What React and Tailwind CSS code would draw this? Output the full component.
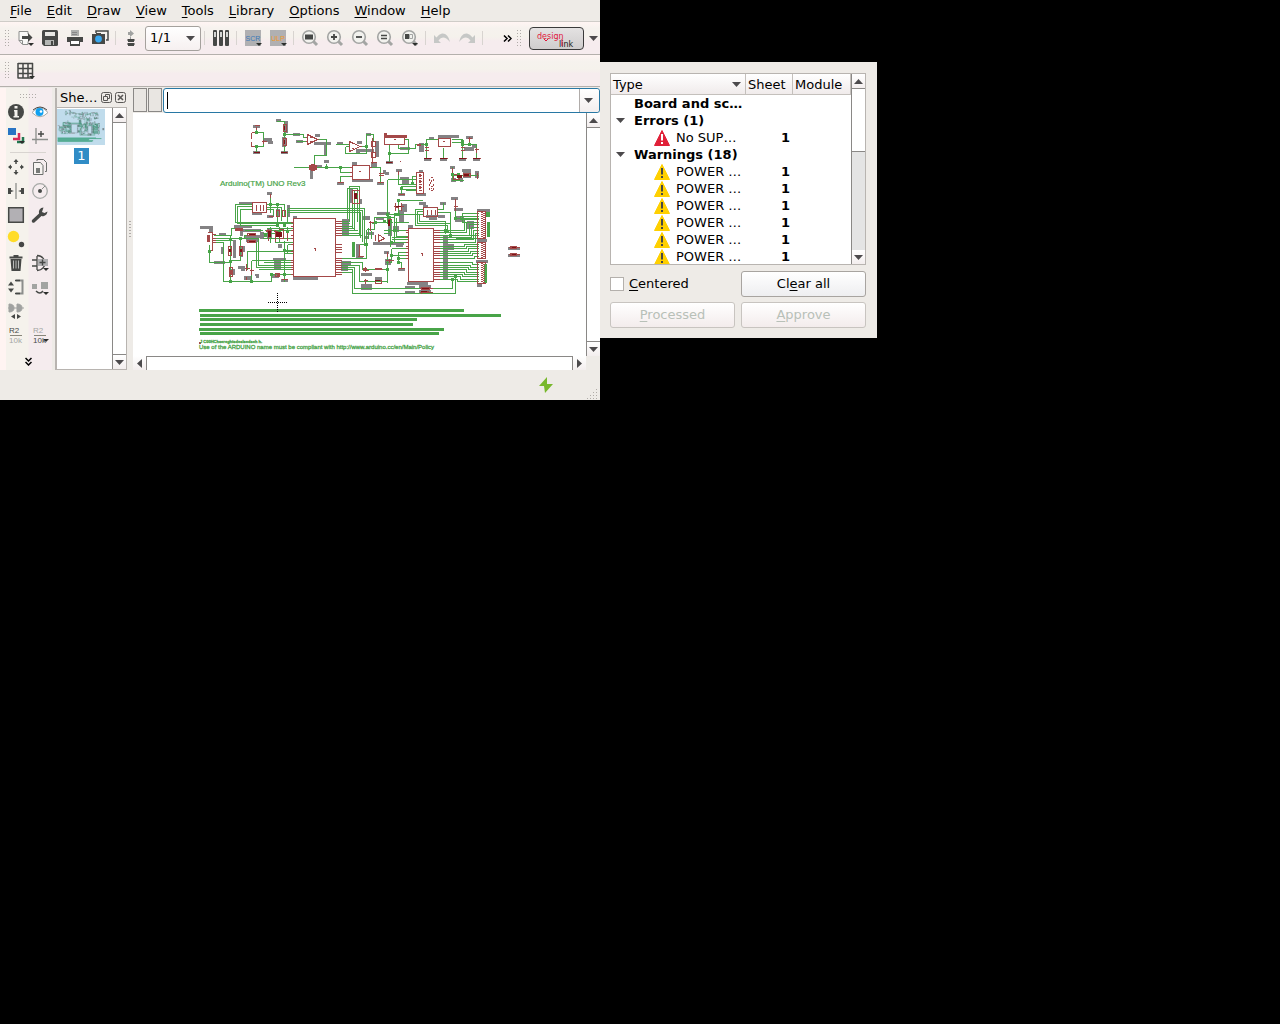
import React from "react";

const GRAY_RECTS = [
  [253,125,7,3],[253,151,7,3],[264,138,8,4],[268,141,5,3],[276,119,5,3],[285,121,3,12],[282,137,4,10],[281,151,7,3],
  [293,133,7,3],[296,140,7,3],[315,134,5,3],[314,142,17,3],[324,143,3,13],[310,169,3,10],[317,165,5,3],[324,160,5,3],
  [337,142,6,3],[356,150,4,3],[352,162,5,3],[337,182,7,3],[267,192,5,3],[239,202,14,3],[252,212,10,3],[267,215,6,3],
  [276,209,4,8],[287,205,3,12],[200,226,13,3],[293,216,4,2],[342,219,7,16],[350,189,3,14],[357,141,5,3],[356,149,18,3],
  [366,133,5,3],[375,141,4,16],[371,163,6,4],[386,161,7,3],[400,147,10,3],[419,143,5,9],[429,137,5,3],[438,135,21,3],
  [424,158,7,3],[440,158,7,3],[459,158,7,3],[473,158,7,3],[464,147,10,4],[472,145,5,3],[466,136,7,3],[352,179,21,3],
  [383,170,3,4],[385,172,4,3],[377,182,7,3],[396,169,6,3],[400,177,9,3],[402,180,7,5],[398,193,7,3],[416,193,10,3],
  [419,170,4,3],[450,166,5,3],[462,169,9,3],[451,178,5,4],[460,178,3,4],[463,172,8,6],[475,171,4,7],[359,199,3,5],
  [419,202,7,3],[423,205,5,3],[426,215,11,3],[429,218,8,2],[440,202,6,3],[438,215,7,3],[451,197,7,3],[454,208,9,3],
  [455,216,9,6],[467,221,7,8],[477,209,13,3],[377,212,13,3],[401,204,6,8],[399,210,5,12],[408,225,5,3],[388,222,4,14],
  [209,229,4,3],[219,233,7,3],[221,247,3,7],[233,240,3,18],[240,247,3,10],[242,246,3,6],[214,261,11,3],[238,266,7,3],
  [241,269,4,2],[229,269,6,6],[244,276,7,4],[255,274,4,2],[256,276,3,2],[273,258,13,3],[274,261,7,9],[271,274,8,4],
  [281,279,7,3],[293,276,25,4],[234,225,18,3],[242,229,19,3],[240,229,3,7],[244,235,16,3],[246,239,12,3],[260,232,4,7],
  [341,261,10,4],[341,266,7,5],[278,244,4,4],[356,244,4,13],[443,235,5,45],[448,244,6,6],[407,282,21,3],[405,286,10,3],
  [405,291,10,3],[419,285,12,4],[419,290,12,3],[477,239,10,3],[476,260,12,3],[477,284,5,3],[508,247,12,3],[508,254,12,3],
  [361,284,11,6],[375,277,7,3],[361,273,11,3],[385,259,6,6],[384,251,5,3],[398,268,7,3],[373,242,31,3],[396,244,7,3],
  [356,256,7,3],[367,232,7,3],[376,217,8,3],[267,229,5,10],[363,216,7,4],[393,226,6,6],[364,236,5,3],
];

const WIRES = [
  "M256 129V132H263V146H252M256 146V151M276 121H284V125M284 129V138M284 145V151M284 134H303V137H307M296 141H307",
  "M317 139H326V155H314V165M293 167H309M315 167H352M326 163V167M340 167V172H352M340 182V176H352",
  "M335 144H349M345 146H349M345 146V153H366V134H373V140M361 146H366M366 153V149",
  "M404 139H408V153H389M389 144V161M398 144V148H415V144H426V139H438M426 144V158M443 147V158M451 139H462V158M451 142H462M462 144H476V158M469 138V144",
  "M369 167H380V183M398 172V184H416M387 179V223M387 179H416M401 193V186H416M401 189H416M405 190H416M412 183V176H416M452 166V180H463M452 175H478M458 175V180",
  "M252 204H235V222H293M252 206H237V223H293M252 209H240V225H277M270 194V204M266 204H284V216M266 207H281V220M266 209H273V215M277 204V222M270 204V212",
  "M287 208H364V245M287 210H362V241M287 212H360V237M287 208V221",
  "M347 218V188H357V221M349 221V186H359V235M352 190V228M354 230V190M341 221H347M341 223H349M341 226H352M341 228H354M341 230H357M341 233H359M341 235H362",
  "M423 209H415V225H447V230M423 211H417V223H450V235M423 214H419V221H445V233M437 209H443V202M437 212H450V235M398 200H422M398 200V205M387 214H423M455 200V218H478",
  "M213 235H231V228H238M213 238H244V235H252M213 240H232M215 242H223V281H271V274H293M209 244V262H230M230 235V281M240 238V260H230M247 269V251H293M251 260V281M251 260H293M256 242V267H293M258 238V265H293M246 242H256M244 238H258M263 262H293M258 269H293",
  "M284 240V281M284 250H293M284 253H293M287 244V253M287 244H293M240 225H266M244 230H262M262 238H293M262 233H275V242H293M266 228H293V230M264 230H290M279 226V241M287 226V240M270 226V242",
  "M341 258H366M341 262H362V269M341 265H359V281H363M341 267H354V288H452V279M341 269H352V293H455V276M341 272H352M366 229V258M359 244H366M366 229H374",
  "M391 248H408M391 248V262H385M408 252H398V262H401V268M408 255H391M398 258H408M387 256V282M364 269H387M363 281H387M391 242H408M391 239H408M391 237H408M383 230H408M383 233H390V242",
  "M374 229V217H394V222H408M387 214V219M376 222H392M394 212V242M398 205V214M371 223H376M371 238V230M368 227V238M390 217V246M396 217V236H408",
  "M439 230H464V219H478M439 232H466V222H478M439 235H469V224H478M439 237H471V227H478M439 239H473V230H478M439 242H475V233H478M464 219H460V216H478M466 222H462V213H478M458 235H478M455 238H478",
  "M439 246H464V244H478M439 248H466V246H478M439 251H468V248H478M439 253H470V251H478M439 255H472V253H478M439 258H474V256H478",
  "M439 262H472V264H478M439 265H470V267H478M439 267H468V269H478M439 269H466V272H478M439 272H464V274H478M439 274H462V276H478M439 276H460V279H478M439 279H457V281H478",
];

const PARTS = [
  "M251 132V138M251 141V146M251 132H254M251 146H254M261 141H266M263 139V143M254 152H259M256 126V129M254 125H259",
  "M283 124H286V131H283ZM283 138H286V145H283ZM281 152H287M307 134V144L317 139ZM305 137H307M305 141H307M309 137H311M309 141H311",
  "M349 141V151L360 146ZM351 143H353M351 148H353M384 135H404V144H384ZM438 138H450V146H438ZM352 165H369V179H352ZM349 167H352M349 172H352M349 176H352M369 167H371",
  "M386 162H392M399 161H400M424 158H431M440 158H447M459 158H466M473 158H480M424 147H428M424 150H428M460 147H464M460 150H464M474 149H478M476 147V152M469 136V141M467 138H471M337 182H343M377 182H383M378 173H383M378 175H383",
  "M371 141H375V146H371ZM371 152H375V157H371ZM372 137V163M370 162H376M416 172H423V193H416ZM418 175H421M418 178H421M418 181H421M418 184H421M418 187H421M418 190H421M398 170V174M398 194H404",
  "M423 207H437V216H423ZM427 209V214M431 209V214M435 209V214M252 202H266V212H252ZM256 204V210M260 204V210M263 204V210M276 210H279V216H276ZM282 210H285V216H282ZM268 216H273M270 193V197",
  "M395 202V210M398 204V208M401 202V210M393 206H403M389 215V225M387 219H391M352 190H359V203H352ZM354 194H357M354 198H357M455 198V210M453 206H457M463 173H470V176H463ZM452 167V174M477 172V178M453 174H459V179H453Z",
  "M293 218H335V276H293ZM408 228H433V281H408ZM207 232H212V250H207M212 234H215M212 238H215M212 240H215M212 242H215M235 228H242V230H235ZM247 233H255V235H247ZM247 240H255V242H247Z",
  "M228 246H231V255H228ZM239 246H242V255H239ZM229 267H232V276H229ZM246 263V270M244 268H249M251 268V274M249 270H253M246 276V279M275 273H279V276H275ZM281 279H287M268 228V240M266 230H271M279 229H283V238H279ZM287 229V240M273 231H277M275 229V241",
  "M290 222H293M290 226H293M290 230H293M290 235H293M290 238H293M290 244H293M290 251H293M290 260H293M290 262H293M290 265H293M290 267H293M290 269H293M290 274H293",
  "M335 221H341M335 223H341M335 226H341M335 228H341M335 230H341M335 233H341M335 235H341M335 244H341M335 247H341M335 249H341M335 252H341M335 258H341M335 260H341M335 262H341M335 265H341M335 267H341M335 269H341M335 272H341M335 274H341",
  "M405 230H408M405 232H408M405 237H408M405 242H408M405 246H408M405 248H408M405 252H408M405 255H408M405 258H408M433 230H439M433 232H439M433 235H439M433 237H439M433 239H439M433 242H439M433 246H439M433 248H439M433 251H439M433 253H439M433 255H439M433 258H439M433 262H439M433 265H439M433 267H439M433 269H439M433 272H439M433 274H439M433 276H439M433 279H439",
  "M477 211H485V238H477ZM477 242H485V258H477ZM477 262H485V283H477ZM375 234V240M378 234L384 238L378 241ZM359 244V255M357 256H363M385 260H393M389 258V262M398 268H404M363 267V270H368M363 280H367M365 266V271M365 278V283M374 269H382M375 280H381V283H375ZM387 251V256",
  "M421 287H429V289H421ZM419 288H432M419 292H432M421 290V293M510 246H516V248H510ZM508 247H519M510 253H516V255H510ZM508 254H519M370 220V230M368 222H373",
  "M430 177H432M429 178V180M433 178V180M431 181V179M430 183V181M429 183V185M433 183V185M430 186H432M429 187V189M433 187V189M431 187V188M430 190H432",
];

const NODES = [
  [256,132],[256,146],[284,134],[326,167],[340,167],[366,146],[389,153],[426,144],[462,141],[462,144],[469,144],[412,183],
  [401,188],[398,200],[387,214],[396,214],[398,214],[270,204],[277,204],[277,225],[284,225],[230,239],[230,261],[230,281],
  [240,238],[251,281],[209,251],[284,250],[284,274],[271,274],[391,255],[398,258],[398,262],[391,242],[387,269],[366,244],
  [455,218],[447,231],[450,235],[445,230],[452,279],[455,276],[279,231],[287,231],[384,221],[390,221],[389,217],[458,174],
  [452,174],[375,222],[394,230],[389,230],[265,235],
];

const DETAIL_RED = [
  [384,133,3,3],[384,135,23,3],[309,165,8,5],[311,164,4,7],[207,235,3,7],[229,270,4,5],[236,228,6,2],[277,273,3,3],
  [314,248,2,1],[315,249,1,2],[421,253,2,1],[422,254,1,2],[394,139,2,1],[443,141,2,1],[359,171,2,1],[363,268,4,3],[375,268,7,2],
  [266,230,4,2],[417,144,4,2],[199,342,2,2],[396,206,3,2],[463,174,6,2],[421,291,8,2],
];

const DARK_RED = [
  [284,126,1,4],[284,140,1,4],[254,152,6,1],[281,152,6,1],[386,162,6,1],[424,158,7,1],[440,158,7,1],[459,158,7,1],[473,158,7,1],
  [457,175,5,3],[464,174,5,2],[354,193,3,6],[229,249,2,3],[240,249,2,3],[268,231,3,6],[276,232,6,5],[249,234,6,1],[249,241,6,1],
  [388,220,2,6],[396,206,5,1],[422,288,7,1],[421,291,6,1],[512,247,4,1],[512,254,4,1],[375,280,5,1],
];

const GREEN_BARS = [
  [199,309,265],[200,314,301],[200,318,217],[200,323,213],[199,328,245],[200,332,239],
];

function Schematic({ viewBox, className, thumb }) {
  return (
    <svg viewBox={viewBox} className={className} shapeRendering={thumb ? "auto" : "crispEdges"} preserveAspectRatio="xMinYMin meet" role="img" aria-label="Schematic sheet 1">
      <g fill="#848284">
        {GRAY_RECTS.map(([x, y, w, h], i) => <rect key={i} x={x} y={y} width={w} height={h} />)}
      </g>
      <g fill="none" strokeWidth="1" transform="translate(.5 .5)">
        <path stroke={thumb ? "#389070" : "#48a448"} strokeWidth={thumb ? 2 : 1} d={WIRES.join("")} />
        <path stroke={thumb ? "#607078" : "#a44848"} strokeWidth={thumb ? 2 : 1} d={PARTS.join("")} />
      </g>
      <g fill={thumb ? "#38a07c" : "#48a448"}>
        {NODES.map(([x, y], i) => <rect key={i} x={x - 1} y={y - 1} width="3" height="3" />)}
        {GREEN_BARS.map(([x, y, w]) => <rect key={y} x={x} y={y} width={w} height={thumb ? 5 : 3} />)}
        <rect x="486" y="212" width="4" height="5" />
        <rect x="487" y="222" width="3" height="15" />
        <rect x="484" y="264" width="3" height="19" />
        <rect x="352" y="242" width="3" height="15" />
      </g>
      {!thumb && (
        <>
          <g fill="#a44848">
            {DETAIL_RED.map(([x, y, w, h], i) => <rect key={i} x={x} y={y} width={w} height={h} />)}
          </g>
          <g fill="#7c1418">
            {DARK_RED.map(([x, y, w, h], i) => <rect key={i} x={x} y={y} width={w} height={h} />)}
          </g>
          <g stroke="#a44848" strokeWidth="2" strokeDasharray="1 1">
            <path d="M482 212V238M482 243V258M482 263V283M420 174V192" />
            <path d="M484 213V238M484 244V258M484 264V283" />
          </g>
          <g fill="#48a448" fontFamily="Liberation Sans, sans-serif">
            <text x="220" y="186" fontSize="8" stroke="#48a448" strokeWidth=".2">Arduino(TM) UNO Rev3</text>
            <text x="200" y="343" fontSize="4" fontWeight="bold" stroke="#48a448" strokeWidth=".3">J C00HChsereghtsdeslsedseh h.</text>
            <text x="199" y="349" fontSize="6" stroke="#48a448" strokeWidth=".3">Use of the ARDUINO name must be compliant with http://www.arduino.cc/en/Main/Policy</text>
          </g>
          <path d="M268 302.5H288M277.5 293V312" stroke="#000" strokeWidth="1" strokeDasharray="1 1" fill="none" />
        </>
      )}
    </svg>
  );
}

const D = "#464846";

function Icon({ size = 18, children }) {
  return (
    <svg width={size} height={size} viewBox="0 0 18 18" fill="none" aria-hidden="true">
      {children}
    </svg>
  );
}

const Drop = ({ x = 10, y = 14 }) => <path d={`M${x} ${y}h6l-3 3z`} fill="#2c2e2c" />;

const Lens = ({ children, drop }) => (
  <Icon>
    <circle cx="8" cy="8" r="6.3" stroke="#a3a5a3" strokeWidth="1.6" fill="#f2f2ee" />
    <path d="M12.5 12.5l3.5 3.5" stroke="#a3a5a3" strokeWidth="3" />
    {children}
    {drop && <Drop x={11} y={14} />}
  </Icon>
);

const icons = {
  open: (
    <Icon>
      <path d="M12 5V2.5H3v9l3.500 4H12v-3" stroke="#8c8e8c" strokeWidth="1" fill="#f8f8f6" />
      <path d="M3 11.500h3.500V15" stroke="#8c8e8c" />
      <path d="M6 7h6V4l4.500 4.500L12 13v-3H6z" fill={D} />
      <Drop x={12} y={14} />
    </Icon>
  ),
  save: (
    <Icon>
      <path d="M1 2.500Q1 1 2.500 1h13Q17 1 17 2.500v13q0 1.500-1.500 1.500H3l-2-2z" fill={D} />
      <path d="M4 3h10v4H4z" fill="#e8e8e4" />
      <path d="M4 11h9v5H4z" fill="#b4b6b4" /><path d="M10 12h2v4h-2z" fill={D} />
    </Icon>
  ),
  print: (
    <Icon>
      <path d="M5 1h8v6H5z" fill="#aeb0ae" /><path d="M6 3.500h5M6 5.500h5" stroke="#888" />
      <path d="M1 8h16v5H1z" fill={D} /><path d="M4 11h10v6H4z" fill={D} /><path d="M5 12h8v3H5z" fill="#fff" />
    </Icon>
  ),
  camera: (
    <Icon>
      <path d="M5 4V2h12v9h-2" stroke={D} strokeWidth="1.500" />
      <path d="M1 5h4V4h5v1h4v10H1z" fill={D} /><circle cx="7.500" cy="10" r="3.400" fill="#38a8f0" />
    </Icon>
  ),
  sheet: (
    <Icon>
      <path d="M8 1l4 3.500L8 8zM8 8h1v3H8z" fill="#a0a2a0" /><path d="M6 3h4v3H6z" fill="#a0a2a0" />
      <path d="M6 10h6v3H6zM6 14h6v3H6z" fill={D} /><path d="M5 11h8M5 15h8" stroke={D} />
    </Icon>
  ),
  library: (
    <Icon>
      {[1, 7, 13].map((x) => (
        <g key={x}><rect x={x} y="1" width="4" height="16" rx="1" fill={D} /><path d={`M${x + 1} 3h2v5h-2z`} fill="#d4d6d4" /></g>
      ))}
    </Icon>
  ),
  undo: (
    <Icon><path d="M1 6v8h7L5.500 11.500Q10 5 17 13Q15 4 9 4.500Q6 5 3.500 8.500z" fill="#c6c8c6" /></Icon>
  ),
  redo: (
    <Icon><path d="M17 6v8h-7l2.500-2.500Q8 5 1 13Q3 4 9 4.500Q12 5 14.500 8.500z" fill="#c6c8c6" /></Icon>
  ),
  fit: <Lens><path d="M4 5.500h8v5H4z" fill={D} /></Lens>,
  zin: <Lens><path d="M8 5v6M5 8h6" stroke={D} strokeWidth="1.800" /></Lens>,
  zout: <Lens><path d="M5 8h6" stroke={D} strokeWidth="1.800" /></Lens>,
  zeq: <Lens><path d="M5 6.500h6M5 9.500h6" stroke={D} strokeWidth="1.600" /></Lens>,
  zsel: <Lens drop><path d="M4 5h4v5H4z" fill={D} /><path d="M8.500 5.500h3v4h-3z" stroke="#a3a5a3" /></Lens>,
  grid: (
    <svg width="19" height="18" viewBox="0 0 19 18" fill="none">
      <path d="M2 1.500h15M2 6.500h15M2 11.500h15M2 16h15M2 1v15.500M7 1v15.500M12 1v15.500M16.500 1v15.500" stroke={D} strokeWidth="1.500" />
      <Drop x={13} y={14} />
    </svg>
  ),
};

function TextIcon({ text, color }) {
  return (
    <Icon>
      <path d="M1 1h16v16H1z" fill="#b0b0b2" />
      <text x="9" y="12" fontSize="7" textAnchor="middle" fontFamily="Liberation Sans, sans-serif" fill={color}>{text}</text>
      <Drop x={12} y={14} />
    </Icon>
  );
}

const sideIcons = [
  ["Info", <Icon><circle cx="9" cy="9" r="8" fill={D} /><path d="M7.500 3h3v2.500h-3zM7 7h3.500v6H12v1.500H6.500V13h1V8.500H7z" fill="#f4f2ee" /></Icon>],
  ["Show", <Icon><path d="M1 9.500Q9 0 17 9.500Q9 18 1 9.500z" fill="#fff" stroke="#a8aaa8" /><path d="M2 7Q9 1 16 7" stroke={D} /><circle cx="8.500" cy="9" r="4" fill="#10a0f0" /><circle cx="10" cy="8.500" r="1.300" fill="#fff" /></Icon>],
  ["Layers", <Icon><path d="M1 1h8v7H1z" fill="#2874c4" /><path d="M12 6v6H6" stroke="#d82858" strokeWidth="2.500" /><path d="M16 10v5h-6" stroke="#207850" strokeWidth="2.500" /><Drop x={12} y={14} /></Icon>],
  ["Mark", <Icon><path d="M5 1v16M1 12.500h16" stroke="#8c8e8c" strokeWidth="1.300" /><path d="M10 4v6M7 7h6" stroke={D} strokeWidth="1.400" /></Icon>],
  ["Move", <Icon><path d="M9 1l2.500 3h-5zM9 17l2.500-3h-5zM1 9l3-2.500v5zM17 9l-3-2.500v5z" fill={D} /><path d="M9 3v3M9 12v3M3 9h2M13 9h2" stroke={D} strokeWidth="1.500" /></Icon>],
  ["Copy", <Icon><path d="M6 3V1.500h6.500l3 3v9H14" stroke="#6c6e6c" /><path d="M2.500 4.500h7l2.500 3v9H2.500z" stroke="#6c6e6c" fill="#f6f2f0" /><path d="M5 10h4v5H5z" fill="#787a78" /></Icon>],
  ["Mirror", <Icon><path d="M9 1v16" stroke="#8c8e8c" strokeWidth="1.300" /><path d="M1 6h3v2l3 1-3 1v2H1zM17 6h-3v2l-3 1 3 1v2h3z" fill={D} /></Icon>],
  ["Rotate", <Icon><circle cx="9" cy="9" r="7.300" stroke="#a8aaa8" strokeWidth="1.300" /><circle cx="9" cy="9" r="2" fill={D} /><path d="M11 7l3-3" stroke="#8c8e8c" /></Icon>],
  ["Group", <Icon><path d="M1.700 1.700h14.600v14.600H1.700z" fill="#b2b0b4" stroke={D} strokeWidth="1.500" /></Icon>],
  ["Change", <Icon><path d="M2.500 15L9 9" stroke={D} strokeWidth="3.500" strokeLinecap="round" /><path d="M12.500 1.500Q7 2 8 8q2 3 5 2q3-1 3.500-4.500L13.500 7L11 6z" fill={D} /></Icon>],
  ["Paint", <Icon><circle cx="6.500" cy="6.500" r="5.700" fill="#ffdc28" /><circle cx="14.500" cy="14.500" r="2.700" fill={D} /></Icon>],
  null,
  ["Delete", <Icon><path d="M3.500 5h11l-1 12h-9zM2.500 2.500h13v2h-13zM6.500 1h5v2h-5z" fill={D} /><path d="M6.500 6.500v8M9 6.500v8M11.500 6.500v8" stroke="#b8bab8" /></Icon>],
  ["Add", <Icon><path d="M6 1.500c6 0 8 5 8 7.500s-2 7.500-8 7.500M1 6h5M1 12h5M6 2v14" stroke={D} strokeWidth="1.300" /><path d="M7 5h10v7H7z" fill="#b0b0b2" /><path d="M11.500 5.500v6M8.500 8.500h6" stroke={D} strokeWidth="1.400" /><Drop x={12} y={14} /></Icon>],
  ["Pinswap", <Icon><path d="M9 2.500h6.500v13H9" stroke="#8c8e8c" strokeWidth="2" /><path d="M8 2.500h5M8 15.500h5" stroke={D} strokeWidth="1.600" /><path d="M1 7.500l3-4 3 4zM1 10.500l3 4 3-4z" fill={D} /></Icon>],
  ["Replace", <Icon><path d="M1 6h5v5H1zM10 4h7v7h-7z" fill="#a2a4a2" /><path d="M5 13q4 4 7 0" stroke={D} strokeWidth="1.400" /><Drop x={12} y={14} /></Icon>],
  ["Gateswap", <Icon><path d="M2 2q5 0 5 4T2 10zM10 2q5 0 5 4t-5 4zM1 6h16" fill="#a0a2a0" stroke="#a0a2a0" /><path d="M8 12v5l-4-2.500zM10 12v5l4-2.500z" fill={D} /></Icon>],
  null,
  ["Name", <R2 a={D} b="#a4a6a4" />],
  ["Value", <R2 a="#a4a6a4" b={D} drop />],
];

function R2({ a, b, drop }) {
  return (
    <Icon>
      <text x="2" y="7" fontSize="8" fontFamily="Liberation Sans, sans-serif" fill={a}>R2</text>
      <path d="M3 9.500h12" stroke="#88867a" strokeWidth="1" />
      <text x="2" y="17" fontSize="8" fontFamily="Liberation Sans, sans-serif" fill={b}>10k</text>
      {drop && <Drop x={12} y={13} />}
    </Icon>
  );
}

function Tool({ label, children, narrow }) {
  return (
    <button type="button" aria-label={label} className={`flex h-6 shrink-0 items-center justify-center ${narrow ? "w-[23px]" : "w-[25px]"}`}>
      {children}
    </button>
  );
}

const Sep = () => <span className="mx-[3px] h-3.5 w-px shrink-0 bg-[#d8d4d0]" />;

function Handle() {
  return (
    <svg width="4" height="17" viewBox="0 0 4 17" className="shrink-0" aria-hidden="true">
      <path d="M.5 0v17M3.500 0v17" stroke="#b0aca8" strokeDasharray="1 2" />
    </svg>
  );
}

function Arrow({ dir = "down", className = "" }) {
  const d = { down: "M0 2h9L4.500 7z", up: "M0 7h9L4.500 2z", left: "M7 0v9L2 4.500z", right: "M2 0v9l5-4.500z" }[dir];
  return <svg width="9" height="9" viewBox="0 0 9 9" className={className} aria-hidden="true"><path d={d} fill="#4c4a4c" /></svg>;
}

function ScrollButton({ dir, label }) {
  return (
    <button type="button" aria-label={label} className="flex h-[14px] w-[13px] shrink-0 items-center justify-center bg-gradient-to-b from-white to-[#f3eeee]">
      <Arrow dir={dir} />
    </button>
  );
}

function VScroll({ thumb = "flex-1" }) {
  return (
    <div className="flex w-[14px] shrink-0 flex-col border-l border-[#8a8886] bg-[#e4e4e4]">
      <ScrollButton dir="up" label="Scroll up" />
      <div className={`border-y border-[#8a8886] bg-white ${thumb}`} />
      <div className="mt-auto"><ScrollButton dir="down" label="Scroll down" /></div>
    </div>
  );
}

const U = ({ children }) => <span className="underline underline-offset-2">{children}</span>;

function MenuBar() {
  const items = ["File", "Edit", "Draw", "View", "Tools", "Library", "Options", "Window", "Help"];
  return (
    <nav className="flex h-[22px] items-center gap-px border-b border-[#cfccc8] pl-[3px]">
      {items.map((t) => (
        <button key={t} type="button" className="px-[7px]"><U>{t[0]}</U>{t.slice(1)}</button>
      ))}
    </nav>
  );
}

const barFill = "bg-[linear-gradient(180deg,#fff5f3_0,#f6f2ee_20%,#f5f2ec_45%,#f6ecee_60%)]";

function MainToolbar() {
  return (
    <div className={`flex h-[33px] items-center border-b border-[#b4b0ac] pl-[5px] ${barFill}`}>
      <Handle />
      <span className="w-[3px] shrink-0" />
      <Tool label="Open">{icons.open}</Tool>
      <Tool label="Save">{icons.save}</Tool>
      <Tool label="Print">{icons.print}</Tool>
      <Tool label="Export image">{icons.camera}</Tool>
      <Sep />
      <Tool label="Board" narrow>{icons.sheet}</Tool>
      <div className="relative ml-[3px] flex shrink-0 items-center">
        <select aria-label="Sheet" className="h-[25px] w-14 appearance-none rounded-[3px] border border-[#a5a19d] bg-gradient-to-b from-white to-[#f6f0f0] pl-1 text-[13px]">
          <option>1/1</option>
        </select>
        <Arrow className="pointer-events-none absolute right-1.5" />
      </div>
      <Sep />
      <Tool label="Library manager">{icons.library}</Tool>
      <Sep />
      <Tool label="Script"><TextIcon text="SCR" color="#3c78b8" /></Tool>
      <Tool label="User language program"><TextIcon text="ULP" color="#f09828" /></Tool>
      <Sep />
      <Tool label="Zoom to fit">{icons.fit}</Tool>
      <Tool label="Zoom in">{icons.zin}</Tool>
      <Tool label="Zoom out">{icons.zout}</Tool>
      <Tool label="Redraw">{icons.zeq}</Tool>
      <Tool label="Zoom select">{icons.zsel}</Tool>
      <Sep />
      <Tool label="Undo">{icons.undo}</Tool>
      <Tool label="Redo">{icons.redo}</Tool>
      <Sep />
      <button type="button" aria-label="More tools" className="mr-[5px] ml-auto">
        <svg width="9" height="7" viewBox="0 0 9 7"><path d="M1 .5l3 3-3 3M5 .5l3 3-3 3" stroke="#000" strokeWidth="1.500" fill="none" /></svg>
      </button>
      <Handle />
      <button type="button" aria-label="design link" className="ml-2 h-[23px] w-[55px] shrink-0 rounded-sm border border-[#3a3a3a] bg-gradient-to-b from-[#e4e2e2] to-[#cfcdcd]">
        <svg width="53" height="21" viewBox="0 0 53 21" fontFamily="DejaVu Sans, sans-serif">
          <text x="7" y="11" fontSize="8" fill="#e0183c">design</text>
          <text x="29" y="19" fontSize="8" fill="#181818">link</text>
          <path d="M14 11l2 2 2-2M32 11v7" stroke="#e0183c" fill="none" />
        </svg>
      </button>
      <Arrow className="mr-0.5 ml-[5px] shrink-0" />
    </div>
  );
}

function SideTools() {
  const cell = (entry, i) =>
    entry ? (
      <button key={i} type="button" aria-label={entry[0]} className="flex h-6 items-center justify-center">{entry[1]}</button>
    ) : <span key={i} />;
  return (
    <aside className="flex w-[55px] shrink-0 flex-col bg-[linear-gradient(90deg,#fff4f2_6px,#f5f2ec_6px,#f5f2ec_28px,#f5ecee_29px,#f5ecee_52px,#eeebe7_52px)] pr-[3px] pl-1">
      <svg width="17" height="4" viewBox="0 0 17 4" className="mx-auto mt-[6px] mb-[2px]" aria-hidden="true">
        <path d="M0 .5h17M0 3.500h17" stroke="#b0aca8" strokeDasharray="1 2" />
      </svg>
      <div className="grid grid-cols-2">{sideIcons.slice(0, 4).map(cell)}</div>
      <span className="mx-1.5 mt-1 mb-0.5 h-px bg-[#d8d4d0]" />
      <div className="grid grid-cols-2">{sideIcons.slice(4).map(cell)}</div>
      <button type="button" aria-label="More tools" className="mx-auto mt-2.5">
        <svg width="7" height="9" viewBox="0 0 7 9"><path d="M.5 1l3 3 3-3M.5 5l3 3 3-3" stroke="#000" strokeWidth="1.500" fill="none" /></svg>
      </button>
    </aside>
  );
}

function SheetsDock() {
  return (
    <section className="flex w-[72px] shrink-0 flex-col border-l-2 border-[#b8b4b0]">
      <header className="flex h-[19px] items-center gap-[3px] pl-[3px]">
        <span className="flex-1">She…</span>
        <button type="button" aria-label="Float">
          <svg width="11" height="11" viewBox="0 0 11 11" fill="none" stroke="#5a5856"><rect x=".5" y=".5" width="10" height="10" rx="2" /><path d="M4.500 5V2.500h4v4H6.500M2.500 4.500h4v4h-4z" /></svg>
        </button>
        <button type="button" aria-label="Close" className="mr-[3px]">
          <svg width="11" height="11" viewBox="0 0 11 11" fill="none" stroke="#5a5856"><rect x=".5" y=".5" width="10" height="10" rx="2" /><path d="M3 3l5 5M8 3L3 8" strokeWidth="1.600" /></svg>
        </button>
      </header>
      <div className="flex flex-1 border-y border-r border-[#b8b4b0] bg-white">
        <div className="flex flex-1 flex-col items-start">
          <div className="mt-px h-9 w-12 bg-[#c0dcec]">
            <Schematic thumb viewBox="195 112 330 248" className="h-9 w-12" />
          </div>
          <span className="mt-[3px] ml-[17px] flex h-4 w-[15px] items-center justify-center bg-[#308cc6] text-white">1</span>
        </div>
        <VScroll />
      </div>
    </section>
  );
}

function Editor() {
  return (
    <main className="flex min-w-0 flex-1 flex-col">
      <div className="flex h-[25px] items-stretch">
        <span className="mb-px w-[14px] border border-[#8a8886] bg-[#e9e6e2]" />
        <span className="mr-px mb-px ml-px w-[14px] border border-[#8a8886] bg-[#e9e6e2]" />
        <div className="flex min-w-0 flex-1 items-stretch rounded-[3px] border border-[#2878a4] bg-white">
          <span className="my-[3px] ml-[3px] w-px bg-black" />
          <input aria-label="Command line" className="min-w-0 flex-1 bg-transparent outline-none" />
          <button type="button" aria-label="Command history" className="flex w-5 items-center justify-center rounded-r-[3px] border-l border-[#b0acaa] bg-gradient-to-b from-white to-[#f3eeee] pr-0.5"><Arrow /></button>
        </div>
      </div>
      <div className="flex flex-1">
        <div className="min-w-0 flex-1 bg-white">
          <Schematic viewBox="133 113 453 243" className="block w-full" />
        </div>
        <VScroll />
      </div>
      <div className="flex h-[14px] pr-[14px]">
        <ScrollButton dir="left" label="Scroll left" />
        <div className="flex-1 border border-b-0 border-[#8a8886] bg-white" />
        <ScrollButton dir="right" label="Scroll right" />
      </div>
    </main>
  );
}

function EditorWindow() {
  return (
    <div className="flex min-h-[400px] w-[600px] max-w-full flex-col bg-[#eeebe7]">
      <MenuBar />
      <MainToolbar />
      <div className={`mb-px flex h-8 items-center border-b border-[#b4b0ac] pl-[5px] ${barFill}`}>
        <Handle />
        <span className="w-1" />
        <Tool label="Grid">{icons.grid}</Tool>
      </div>
      <div className="flex flex-1">
        <SideTools />
        <SheetsDock />
        <div className="flex w-1.5 shrink-0 items-center justify-center">
          <svg width="2" height="17" viewBox="0 0 2 17" aria-hidden="true"><path d="M1 0v17" stroke="#b0aca8" strokeWidth="2" strokeDasharray="1 2" /></svg>
        </div>
        <Editor />
      </div>
      <footer className="flex h-[30px] items-center justify-end">
        <svg width="14" height="16" viewBox="0 0 14 16" className="mr-[34px]" aria-label="Connected"><path d="M8 0L0 9h5l1 7 8-9H8z" fill="#78b82c" /></svg>
        <svg width="11" height="11" viewBox="0 0 11 11" className="mr-0.5 self-end" aria-hidden="true">
          <path d="M9 .5h1M6 3.500h4M3 6.500h7M0 9.500h10" stroke="#b0aca8" strokeDasharray="1 2" />
        </svg>
      </footer>
    </div>
  );
}

function Alert({ fill, mark }) {
  return (
    <svg width="16" height="16" viewBox="0 0 16 16" className="shrink-0" aria-hidden="true">
      <path d="M8 0.500L15.500 15.500H.5z" fill={fill} stroke={fill} strokeLinejoin="round" />
      <path d="M7 4h2v6.500H7zM7 12h2v2H7z" fill={mark} />
    </svg>
  );
}

const th = "border-r border-b border-[#c4c0bc] bg-gradient-to-b from-white to-[#f0ebeb] p-0 pl-0.5 text-left font-normal";

function ErrorsTable() {
  const group = (label, open) => (
    <tr className="h-[17px]">
      <td colSpan={3} className="p-0 font-bold">
        <div className="flex items-center">
          <span className="flex w-[23px] pl-[5px]">{open && <Arrow />}</span>{label}
        </div>
      </td>
    </tr>
  );
  const item = (label, icon, key) => (
    <tr key={key} className="h-[17px]">
      <td className="p-0"><div className="flex items-center gap-1.5 pl-[43px]">{icon}<span className="whitespace-nowrap">{label}</span></div></td>
      <td className="p-0 pr-[3px] text-right font-bold">1</td>
      <td />
    </tr>
  );
  return (
    <div className="flex h-[192px] border border-[#b8b4b0] bg-white">
      <div className="min-w-0 flex-1 overflow-hidden">
        <table className="w-full table-fixed border-separate border-spacing-0 leading-[17px]">
          <colgroup><col /><col className="w-[47px]" /><col className="w-[58px]" /></colgroup>
          <thead>
            <tr className="h-[21px]">
              <th className={th}><span className="flex items-center justify-between pr-1">Type <Arrow /></span></th>
              <th className={th}>Sheet</th>
              <th className={th}>Module</th>
            </tr>
          </thead>
          <tbody>
            {group("Board and sc…", false)}
            {group("Errors (1)", true)}
            {item("No SUP…", <Alert fill="#e02038" mark="#fff" />, "e")}
            {group("Warnings (18)", true)}
            {[0, 1, 2, 3, 4, 5].map((i) => item("POWER …", <Alert fill="#ffd000" mark="#464846" />, i))}
          </tbody>
        </table>
      </div>
      <VScroll thumb="h-16" />
    </div>
  );
}

function ErrorsDialog() {
  const btn = "h-[26px] rounded-[3px] border bg-gradient-to-b from-white";
  const off = `${btn} border-[#c8c4c0] to-[#f3ecec] text-[#b8c0b8]`;
  return (
    <div role="dialog" aria-label="Errors" className="mt-[62px] w-[277px] bg-[#eeebe7] px-[11px] pt-[11px] pb-[10px] pl-[10px]">
      <ErrorsTable />
      <div className="mt-1.5 grid grid-cols-2 gap-x-1.5 gap-y-[5px]">
        <label className="flex items-center gap-[5px]">
          <input type="checkbox" className="h-[14px] w-[14px] appearance-none border border-[#b4b0ac] bg-white" />
          <span><U>C</U>entered</span>
        </label>
        <button type="button" className={`${btn} border-[#a8a4a0] to-[#eeeef0]`}>Cl<U>e</U>ar all</button>
        <button type="button" disabled className={off}><U>P</U>rocessed</button>
        <button type="button" disabled className={off}><U>A</U>pprove</button>
      </div>
    </div>
  );
}

export default function App() {
  return (
    <div className="flex min-h-screen items-start bg-black font-['DejaVu_Sans',sans-serif] text-[13px] leading-4 text-black">
      <EditorWindow />
      <ErrorsDialog />
    </div>
  );
}
